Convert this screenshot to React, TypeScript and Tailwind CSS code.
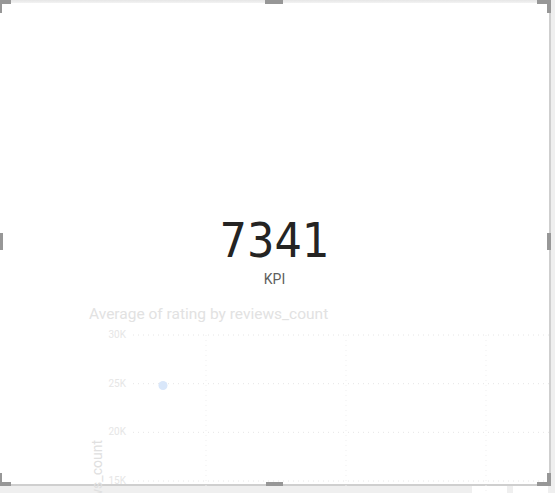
import React from 'react'

const ticks = ['30K', '25K', '20K', '15K']
const gridYs = [5, 53.67, 102.33, 151]
const gridXs = [73, 213, 353]

function Handle({ className }: { className: string }) {
    return <div className={`absolute bg-[#979797] ${className}`} />
}

// faded scatter visual that sits behind the KPI card on the report canvas
function ScatterChart() {
    return (
        <div className="absolute left-[89px] top-[304px] w-[462px] flex flex-col">
            <div className="text-[15.5px] leading-none text-[#e2e2e2]">
                Average of rating by reviews_count
            </div>
            <div className="mt-[7.5px] flex">
                <div className="w-[37px] h-[156px] flex flex-col justify-between items-end">
                    {ticks.map((t) => (
                        <div key={t} className="h-[10px] text-[10px] leading-[10px] text-[#e6e6e6]">{t}</div>
                    ))}
                </div>
                <svg className="ml-[7px]" width="418" height="163">
                    {gridYs.map((y) => (
                        <line key={y} x1="0" x2="418" y1={y} y2={y} stroke="#e6e6e6" strokeWidth="1" strokeDasharray="1 4" />
                    ))}
                    {gridXs.map((x) => (
                        <line key={x} x1={x} x2={x} y1="5" y2="163" stroke="#efefef" strokeWidth="1" strokeDasharray="1 4" />
                    ))}
                    <circle cx="30" cy="55.5" r="4.5" fill="#d9e7fa" />
                </svg>
            </div>
            <div className="absolute left-[1px] top-[133px] text-[14px] leading-none text-[#e0e0e0] whitespace-nowrap [writing-mode:vertical-rl] rotate-180">
                reviews_count
            </div>
        </div>
    )
}

export default function App() {
    return (
        <div className="relative w-[555px] h-[493px] overflow-hidden bg-[#efefef]" style={{ fontFamily: 'Roboto, "DejaVu Sans", sans-serif' }}>
            {/* top shadow strip */}
            <div className="h-[3px] w-[550px] bg-gradient-to-b from-[#e6e6e6] to-[#f3f3f3]" />

            {/* visual frame */}
            <div className="relative w-[551px] h-[483px] bg-white border-r-2 border-b-2 border-[#cfcfcf]">
                <ScatterChart />

                {/* KPI card */}
                <div className="relative flex flex-col items-center pt-[213px]">
                    <div className="text-[48px] leading-none text-[#252423]" style={{ fontFamily: '"DejaVu Sans Condensed", "DejaVu Sans", sans-serif' }}>
                        7341
                    </div>
                    <div className="mt-[8px] text-[14px] leading-none text-[#605e5c]">KPI</div>
                </div>

                {/* selection handles */}
                <Handle className="left-0 top-[-3px] w-[11px] h-[4px]" />
                <Handle className="left-0 top-[-3px] w-[2px] h-[13px]" />
                <Handle className="left-[265px] top-[-3px] w-[18px] h-[4px]" />
                <Handle className="right-[-2px] top-[-3px] w-[14px] h-[4px]" />
                <Handle className="right-[-2px] top-[-3px] w-[4px] h-[13px]" />
                <Handle className="left-0 top-[230px] w-[3px] h-[17px]" />
                <Handle className="right-[-2px] top-[230px] w-[4px] h-[17px]" />
                <Handle className="left-0 bottom-[-2px] w-[11px] h-[4px]" />
                <Handle className="left-0 bottom-[-2px] w-[2px] h-[13px]" />
                <Handle className="left-[266px] bottom-[-2px] w-[17px] h-[4px]" />
                <Handle className="right-[-2px] bottom-[-2px] w-[14px] h-[4px]" />
                <Handle className="right-[-2px] bottom-[-2px] w-[4px] h-[13px]" />
            </div>

            {/* bottom strip */}
            <div className="flex h-[7px] pl-[472px] gap-[6px]">
                <div className="w-[35px] bg-white" />
                <div className="w-[35px] bg-white" />
            </div>
        </div>
    )
}
